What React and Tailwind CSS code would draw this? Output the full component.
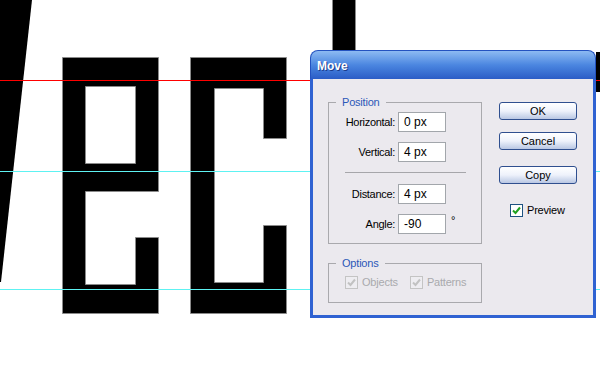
import React from 'react';

const font = "font-['Liberation_Sans',Arial,sans-serif]";

// artwork on the canvas behind the dialog
const Canvas = () => (
  <svg width="600" height="374" viewBox="0 0 600 374" className="block">
    <rect width="600" height="374" fill="#ffffff" />
    <polygon points="-2,0 32,0 1,282 -2,282" fill="#000" />
    <path
      d="M62.5 57.5 H158.5 V191.5 H85.5 V284.5 H135.5 V237.5 H158.5 V313.5 H62.5 Z M85.5 86.5 H135.5 V163.5 H85.5 Z"
      fill="#000"
      fillRule="evenodd"
      stroke="#8a8a8a"
      strokeWidth="1"
    />
    <path
      d="M190.5 57.5 H286.5 V138.5 H263.5 V88.5 H214.5 V282.5 H263.5 V225.5 H286.5 V313.5 H190.5 Z"
      fill="#000"
      stroke="#8a8a8a"
      strokeWidth="1"
    />
    <rect x="332.5" y="-2" width="23" height="120" fill="#000" stroke="#8a8a8a" strokeWidth="1" />
    <rect x="596" y="52" width="6" height="40" fill="#000" />
    {/* guides */}
    <rect x="0" y="80" width="600" height="1" fill="#ff0000" />
    <rect x="0" y="171" width="600" height="1" fill="#5ef2f2" />
    <rect x="0" y="289" width="600" height="1" fill="#5ef2f2" />
  </svg>
);

const Field = ({ value }) => (
  <div className="w-[48px] h-[20px] bg-white border border-[#a2a6ab] pl-[5px] flex items-center text-[12px] leading-none text-black">
    {value}
  </div>
);

const Row = ({ label, value, children }) => (
  <div className="flex items-center h-[20px]">
    <span className="w-[69px] pr-[3px] text-right text-[11px] tracking-[-0.3px] text-black">{label}</span>
    <Field value={value} />
    {children}
  </div>
);

const Button = ({ children, className = '' }) => (
  <div
    className={`w-[78px] h-[18px] rounded-[3px] border border-[#2f4f8f] bg-gradient-to-b from-white via-[#eef2fb] to-[#b9c7e3] flex items-center justify-center text-[11px] text-black ${className}`}
  >
    {children}
  </div>
);

const Check = ({ disabled }) =>
  disabled ? (
    <span className="w-[13px] h-[13px] border border-[#c4c4c4] bg-[#eeedf1] flex items-center justify-center">
      <svg width="9" height="9" viewBox="0 0 9 9">
        <path d="M1 4.5 L3.5 7 L8 1.5" fill="none" stroke="#c2c2c2" strokeWidth="2" />
      </svg>
    </span>
  ) : (
    <span className="w-[13px] h-[13px] border border-[#1d5281] bg-white flex items-center justify-center">
      <svg width="9" height="9" viewBox="0 0 9 9">
        <path d="M1 4.5 L3.5 7 L8 1.5" fill="none" stroke="#21a121" strokeWidth="2" />
      </svg>
    </span>
  );

const Group = ({ title, className = '', children }) => (
  <fieldset className={`w-[154px] border border-[#a9a9ad] ${className}`}>
    <legend className="ml-[7px] px-[6px] text-[11px] leading-[12px] tracking-[-0.2px] text-[#2b58b8]">{title}</legend>
    {children}
  </fieldset>
);

const MoveDialog = () => (
  <div className={`absolute left-[310px] top-[50px] w-[286px] h-[268px] flex flex-col ${font}`}>
    {/* title bar */}
    <div className="h-[29px] rounded-t-[8px] border-t border-x border-[#2352c0] bg-gradient-to-b from-[#8dbaf2] via-[#4b86e0] to-[#2b5cc6] flex items-center pl-[6px] pt-[2px]">
      <span className="text-[12px] font-bold text-white [text-shadow:1px_1px_0_#1a3a8a]">Move</span>
    </div>

    {/* body */}
    <div className="flex-1 flex border-x-[3px] border-b-[3px] border-[#2f62d2] bg-[#ebe9ee] pl-[15px] pt-[17px]">
      <div className="flex flex-col">
        <Group title="Position">
          <div className="flex flex-col pt-[4px] pb-[9px]">
            <Row label="Horizontal:" value="0 px" />
            <div className="mt-[10px]">
              <Row label="Vertical:" value="4 px" />
            </div>
            <div className="mt-[10px] ml-[16px] w-[121px] h-px bg-[#a6a6aa]" />
            <div className="mt-[11px]">
              <Row label="Distance:" value="4 px" />
            </div>
            <div className="mt-[10px]">
              <Row label="Angle:" value="-90">
                <span className="ml-[5px] self-start text-[11px] leading-[12px] text-black">°</span>
              </Row>
            </div>
          </div>
        </Group>

        <Group title="Options" className="mt-[13px]">
          <div className="flex items-center pt-[5px] pb-[11px] pl-[16px] text-[11px] tracking-[-0.2px] text-[#a9a9ad]">
            <Check disabled />
            <span className="ml-[4px]">Objects</span>
            <span className="ml-[12px]">
              <Check disabled />
            </span>
            <span className="ml-[4px]">Patterns</span>
          </div>
        </Group>
      </div>

      <div className="ml-[17px] mt-[6px] flex flex-col">
        <Button>OK</Button>
        <Button className="mt-[12px]">Cancel</Button>
        <Button className="mt-[16px]">Copy</Button>
        <div className="mt-[18px] ml-[11px] flex items-center text-[11px] tracking-[-0.2px] text-black">
          <Check />
          <span className="ml-[4px]">Preview</span>
        </div>
      </div>
    </div>
  </div>
);

export default function App() {
  return (
    <div className="relative w-[600px] h-[374px] overflow-hidden bg-white">
      <Canvas />
      <MoveDialog />
    </div>
  );
}
